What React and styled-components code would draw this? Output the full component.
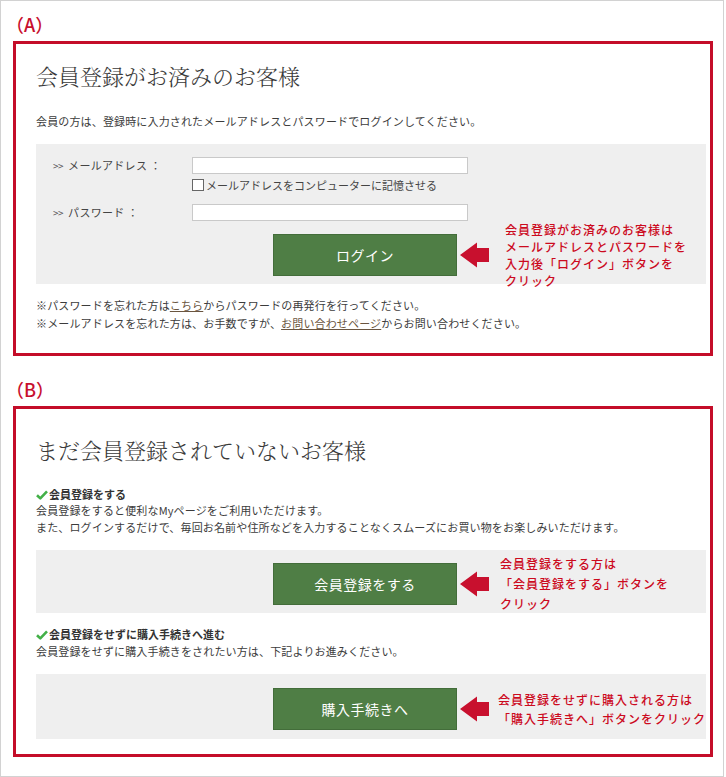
import React from "react";
import styled, { createGlobalStyle } from "styled-components";

const GlobalStyle = createGlobalStyle`
  html, body {
    margin: 0;
    padding: 0;
    background: #fff;
  }
  body {
    font-family: "Noto Sans CJK JP", "Noto Sans", sans-serif;
    color: #333;
  }
`;

const Frame = styled.div`
  width: 724px;
  height: 777px;
  box-sizing: border-box;
  border: 1px solid #d2d2d2;
  padding: 10px 0 0 12px;
`;

const Label = styled.div`
  font-size: 18px;
  line-height: 25px;
  height: 25px;
  font-weight: 500;
  color: #c8102e;
  margin: ${({ $top }) => $top}px 0 ${({ $bottom }) => $bottom}px -7px;
`;

const Box = styled.section`
  width: 700px;
  box-sizing: border-box;
  border: 3px solid #c40d29;
  padding: ${({ $pad }) => $pad};
`;

const Title = styled.h2`
  margin: ${({ $top }) => $top}px 0 0;
  font-family: "Noto Serif CJK JP", "Noto Sans CJK JP", serif;
  font-weight: 300;
  font-size: 22px;
  line-height: 30px;
  color: #3a3a3a;
`;

const Text = styled.p`
  margin: ${({ $top }) => $top || 0}px 0 0;
  font-size: 11px;
  line-height: ${({ $lh }) => $lh || 16}px;
  letter-spacing: 0.15px;
  color: #3c3c3c;
`;

const Heading = styled.h3`
  display: flex;
  align-items: center;
  gap: 1px;
  margin: ${({ $top }) => $top}px 0 0;
  font-size: 11px;
  line-height: 15px;
  font-weight: 700;
  color: #333;
`;

const Panel = styled.div`
  background: #efefef;
  margin-top: ${({ $top }) => $top}px;
  padding: ${({ $pad }) => $pad};
`;

const FormGrid = styled.div`
  display: grid;
  grid-template-columns: 139px 276px;
  align-items: center;
`;

const FieldLabel = styled.label`
  font-size: 11px;
  line-height: 17px;
  color: #444;
  letter-spacing: 0.3px;
  display: flex;
  align-items: center;
  gap: 5px;
`;

const Chevrons = styled.span`
  font-size: 10px;
  letter-spacing: -0.5px;
  color: #555;
`;

const Input = styled.input`
  width: 276px;
  height: 17px;
  box-sizing: border-box;
  border: 1px solid #c9c9c9;
  background: #fff;
  margin: 0;
  padding: 0 4px;
  outline: none;
`;

const RememberRow = styled.label`
  grid-column: 2;
  display: flex;
  align-items: center;
  gap: 2px;
  margin: 4px 0 12px;
  font-size: 11px;
  line-height: 14px;
  color: #444;
  white-space: nowrap;
`;

const CheckBox = styled.span`
  width: 12px;
  height: 12px;
  box-sizing: border-box;
  border: 1px solid #666;
  background: #fff;
  flex: none;
`;

const ButtonRow = styled.div`
  display: flex;
  align-items: center;
  margin: ${({ $top }) => $top || 0}px 0 0 ${({ $left }) => $left}px;
`;

const GreenButton = styled.button`
  width: 184px;
  height: 42px;
  box-sizing: border-box;
  flex: none;
  border: 1px solid #436d3a;
  background: #4f7e45;
  color: #fff;
  font-family: "Noto Sans CJK JP", sans-serif;
  font-size: 14px;
  font-weight: 400;
  letter-spacing: 0.5px;
  cursor: pointer;
`;

const Arrow = styled.svg`
  flex: none;
  margin-left: 3px;
`;

const Note = styled.div`
  margin: ${({ $m }) => $m};
  font-size: 12px;
  letter-spacing: 1px;
  line-height: ${({ $lh }) => $lh}px;
  font-weight: 500;
  color: #cc0a1e;
  white-space: nowrap;
`;

const Link = styled.a`
  color: #6a5540;
  text-decoration: underline;
`;

const RedArrow = () => (
  <Arrow width="30" height="26" viewBox="0 0 30 26">
    <path d="M0 13 L17 0.5 L17 6 L29 6 L29 20 L17 20 L17 25.5 Z" fill="#c8102e" />
  </Arrow>
);

const Check = () => (
  <svg width="12" height="10" viewBox="0 0 12 10">
    <path d="M1 5.2 L4.3 8.4 L11 1.4" fill="none" stroke="#43b047" strokeWidth="2.6" strokeLinejoin="round" />
  </svg>
);

const App = () => (
  <>
    <GlobalStyle />
    <Frame>
      <Label $top={1} $bottom={4}>（A）</Label>
      <Box $pad="0 4px 21px 20px">
        <Title $top={17}>会員登録がお済みのお客様</Title>
        <Text $top={22}>会員の方は、登録時に入力されたメールアドレスとパスワードでログインしてください。</Text>
        <Panel $top={15} $pad="13px 0 8px 17px">
          <FormGrid>
            <FieldLabel>
              <Chevrons>&gt;&gt;</Chevrons>メールアドレス ：
            </FieldLabel>
            <Input type="text" />
            <RememberRow>
              <CheckBox />
              メールアドレスをコンピューターに記憶させる
            </RememberRow>
            <FieldLabel>
              <Chevrons>&gt;&gt;</Chevrons>パスワード ：
            </FieldLabel>
            <Input type="password" />
          </FormGrid>
          <ButtonRow $top={13} $left={220}>
            <GreenButton>ログイン</GreenButton>
            <RedArrow />
            <Note $m="-13px 0 -13px 15px" $lh={17}>
              会員登録がお済みのお客様は
              <br />
              メールアドレスとパスワードを
              <br />
              入力後「ログイン」ボタンを
              <br />
              クリック
            </Note>
          </ButtonRow>
        </Panel>
        <Text $top={12} $lh={18}>
          ※パスワードを忘れた方は<Link href="#">こちら</Link>からパスワードの再発行を行ってください。
          <br />
          ※メールアドレスを忘れた方は、お手数ですが、<Link href="#">お問い合わせページ</Link>からお問い合わせください。
        </Text>
      </Box>

      <Label $top={21} $bottom={4}>（B）</Label>
      <Box $pad="0 4px 15px 20px">
        <Title $top={26}>まだ会員登録されていないお客様</Title>
        <Heading $top={22}>
          <Check />
          会員登録をする
        </Heading>
        <Text $lh={17}>
          会員登録をすると便利なMyページをご利用いただけます。
          <br />
          また、ログインするだけで、毎回お名前や住所などを入力することなくスムーズにお買い物をお楽しみいただけます。
        </Text>
        <Panel $top={14} $pad="13px 0 8px 0">
          <ButtonRow $left={237}>
            <GreenButton>会員登録をする</GreenButton>
            <RedArrow />
            <Note $m="-10px 0 -10px 10px" $lh={20}>
              会員登録をする方は
              <br />
              「会員登録をする」ボタンを
              <br />
              クリック
            </Note>
          </ButtonRow>
        </Panel>
        <Heading $top={14}>
          <Check />
          会員登録をせずに購入手続きへ進む
        </Heading>
        <Text $top={1} $lh={17}>会員登録をせずに購入手続きをされたい方は、下記よりお進みください。</Text>
        <Panel $top={14} $pad="14px 0 9px 0">
          <ButtonRow $left={237}>
            <GreenButton>購入手続きへ</GreenButton>
            <RedArrow />
            <Note $m="0 0 0 8px" $lh={19}>
              会員登録をせずに購入される方は
              <br />
              「購入手続きへ」ボタンをクリック
            </Note>
          </ButtonRow>
        </Panel>
      </Box>
    </Frame>
  </>
);

export default App;
